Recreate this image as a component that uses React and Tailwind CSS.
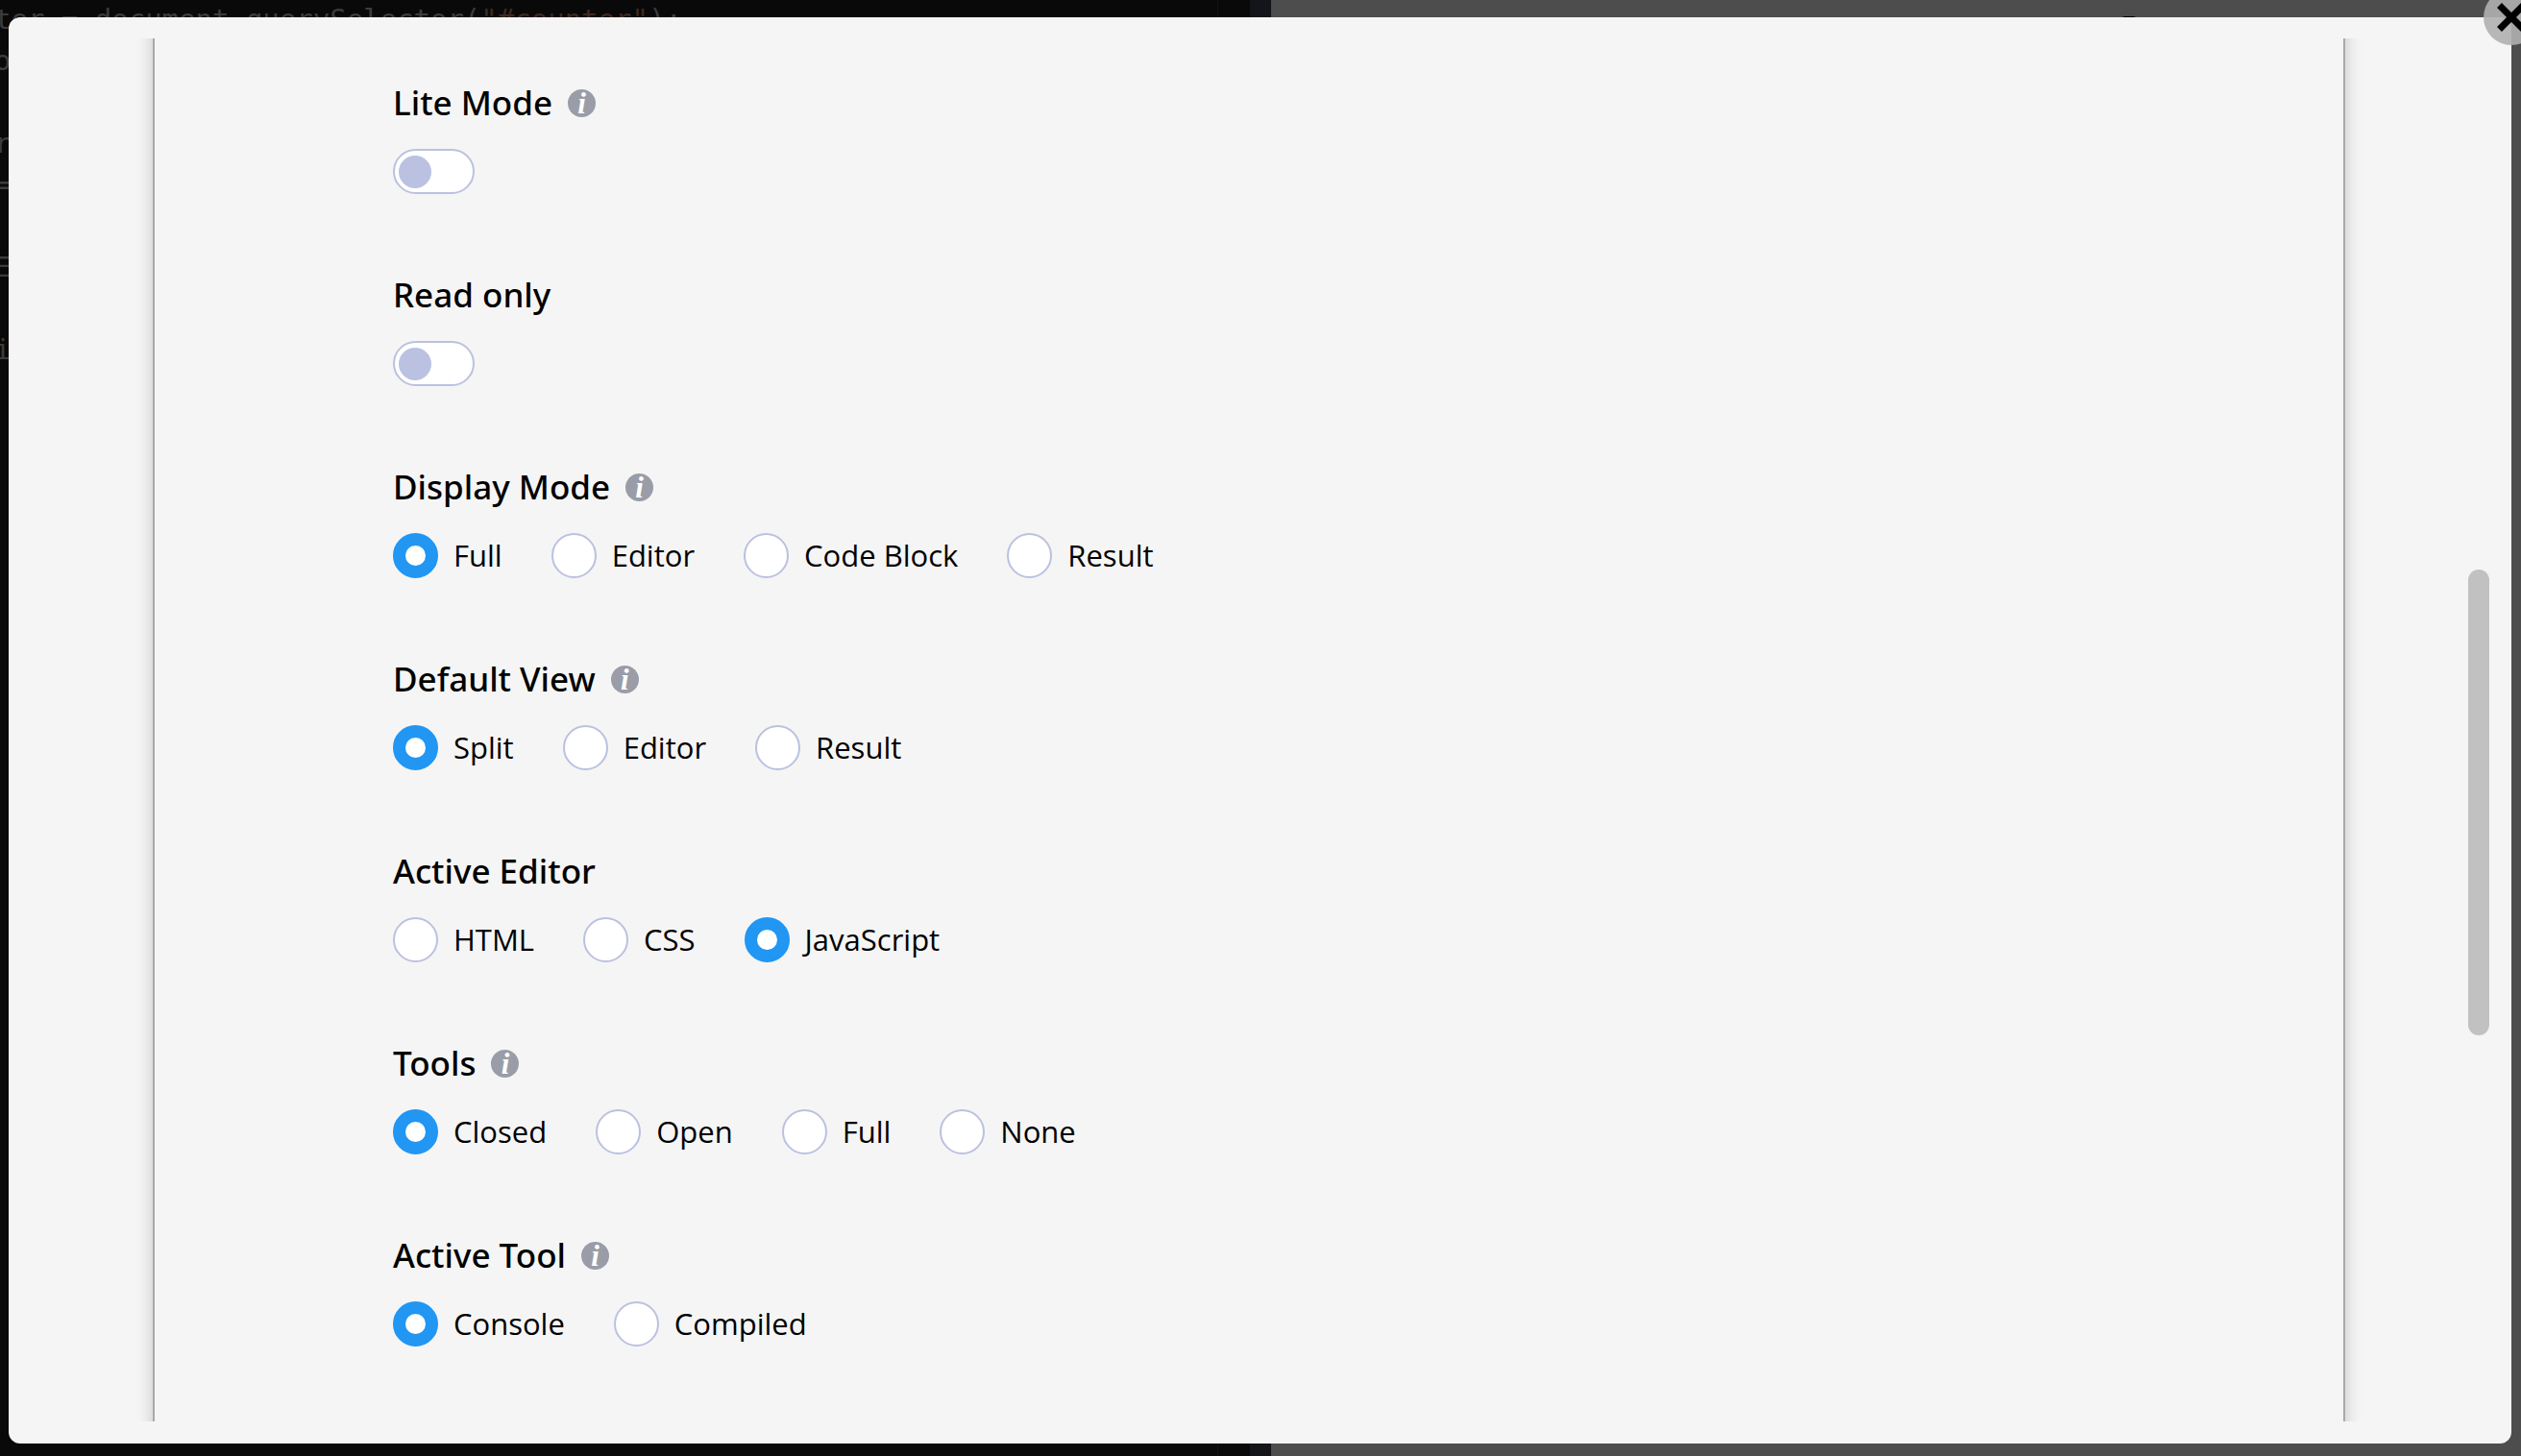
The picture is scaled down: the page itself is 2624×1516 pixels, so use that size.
import React, { useState } from "react";

const groups = [
  { title: "Display Mode", name: "display-mode", info: true, options: ["Full", "Editor", "Code Block", "Result"], value: "Full" },
  { title: "Default View", name: "default-view", info: true, options: ["Split", "Editor", "Result"], value: "Split" },
  { title: "Active Editor", name: "active-editor", info: false, options: ["HTML", "CSS", "JavaScript"], value: "JavaScript" },
  { title: "Tools", name: "tools", info: true, options: ["Closed", "Open", "Full", "None"], value: "Closed" },
  { title: "Active Tool", name: "active-tool", info: true, options: ["Console", "Compiled"], value: "Console" },
];

function InfoButton({ topic }) {
  return (
    <button
      type="button"
      aria-label={`About ${topic}`}
      className="flex size-[29px] items-center justify-center rounded-full bg-[#9a9da8] font-['Liberation_Serif',serif] text-[31px] leading-none font-bold text-white italic"
    >
      i
    </button>
  );
}

function Heading({ id, title, info }) {
  return (
    <div className="flex h-12 items-center gap-4">
      <h2 id={id} className="font-['Noto_Sans',sans-serif] text-[35px] leading-[48px] font-medium">
        {title}
      </h2>
      {info && <InfoButton topic={title} />}
    </div>
  );
}

function Toggle({ title, name, info }) {
  const [on, setOn] = useState(false);
  return (
    <div className="flex flex-col gap-6">
      <Heading id={name} title={title} info={info} />
      <input
        type="checkbox"
        role="switch"
        aria-labelledby={name}
        checked={on}
        onChange={(e) => setOn(e.target.checked)}
        className="flex h-[47px] w-[85px] appearance-none items-center rounded-full border-2 border-[#bbc1e1] bg-white px-1 before:size-[34px] before:rounded-full before:bg-[#bbc1e1] checked:justify-end checked:before:bg-[#2196f3]"
      />
    </div>
  );
}

function RadioGroup({ title, name, info, options, value }) {
  const [selected, setSelected] = useState(value);
  return (
    <div role="radiogroup" aria-labelledby={name} className="flex flex-col gap-6">
      <Heading id={name} title={title} info={info} />
      <div className="flex gap-[51px]">
        {options.map((option) => (
          <label key={option} className="flex items-center gap-4 text-[31px] leading-[47px]">
            <input
              type="radio"
              name={name}
              checked={selected === option}
              onChange={() => setSelected(option)}
              className="size-[47px] shrink-0 appearance-none rounded-full border-2 border-[#bbc1e1] bg-white checked:border-[13px] checked:border-[#2196f3]"
            />
            {option}
          </label>
        ))}
      </div>
    </div>
  );
}

function Backdrop() {
  return (
    <div aria-hidden="true" className="absolute inset-0 flex">
      <div className="flex flex-1 overflow-hidden border-r-[22px] border-[#14151b] bg-[#090909]">
        <pre className="-mt-px -ml-[6px] w-[1274px] shrink-0 border-r border-[#141414] font-['DejaVu_Sans_Mono',monospace] text-[29px] leading-[43px] text-[#3c3c3c]">
          {"ter = document.querySelector("}
          <span className="text-[#3e2a22]">{'"#counter"'}</span>
          {");\no\n\nr\n=\n\nE\n\ni"}
        </pre>
      </div>
      <div className="flex-1 bg-[#4d4d4d] pt-[17px]">
        <div className="ml-[68%] h-1 w-4 rounded-t-full bg-black" />
      </div>
    </div>
  );
}

export default function App() {
  return (
    <div className="relative flex h-screen overflow-hidden bg-[#4d4d4d] pt-[18px] pr-[10px] pb-[13px] pl-[9px] font-['Open_Sans','Noto_Sans',sans-serif] text-black">
      <Backdrop />
      <div role="dialog" aria-label="Embed settings" className="relative flex flex-1 rounded-xl bg-[#f5f5f5] pt-[22px] pr-[23px] pb-[23px]">
        <button
          type="button"
          aria-label="Close"
          className="absolute -top-[29px] -right-[29px] z-10 flex size-[58px] items-center justify-center rounded-full bg-[#b0b0b0]/90"
        >
          <svg viewBox="0 0 30 30" className="size-[30px]" stroke="#000" strokeWidth="7" fill="none">
            <path d="M2.5 2.5 27.5 27.5M27.5 2.5 2.5 27.5" />
          </svg>
        </button>
        <div className="flex flex-1 overflow-hidden pr-32 pl-[150px]">
          <main className="-my-8 flex flex-1 flex-col gap-[81px] border-x-2 border-[#a9a9a9] px-[248px] pt-[75px] shadow-[0_0_16px_rgba(0,0,0,0.2)]">
            <Toggle title="Lite Mode" name="lite-mode" info />
            <Toggle title="Read only" name="read-only" />
            {groups.map((group) => (
              <RadioGroup key={group.name} {...group} />
            ))}
          </main>
        </div>
        <div aria-hidden="true" className="flex w-[22px] flex-col">
          <div className="flex-[553]" />
          <div className="flex-[485] rounded-full bg-[#c1c1c1]" />
          <div className="flex-[402]" />
        </div>
      </div>
    </div>
  );
}
